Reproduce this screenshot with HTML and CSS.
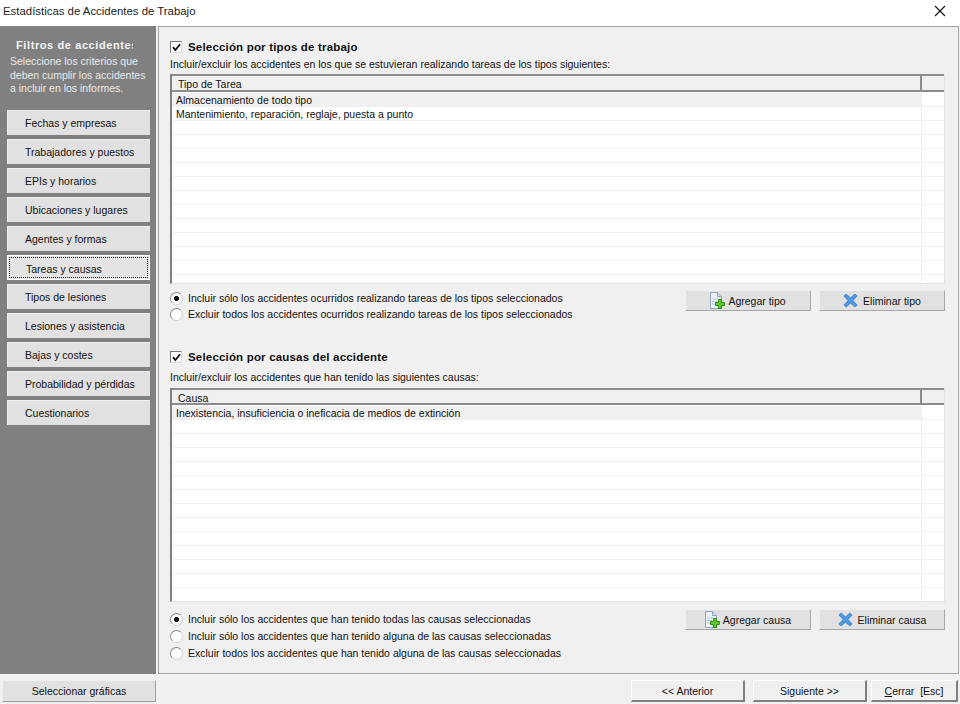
FILE: index.html
```html
<!DOCTYPE html>
<html lang="es">
<head>
<meta charset="utf-8">
<title>Estadísticas de Accidentes de Trabajo</title>
<link rel="stylesheet" href="styles.css">
</head>
<body>
<svg class="defs" width="0" height="0" aria-hidden="true">
  <symbol id="i-add" viewBox="0 0 18 18">
    <path d="M2.5 .5h7l4 4v12h-11z" fill="#eef3fb" stroke="#8fa3c4"/>
    <path d="M9.5 .5v4h4" fill="#cfdcf0" stroke="#8fa3c4"/>
    <path d="M4 7h7M4 9.5h5M4 12h4" stroke="#b4c4dc"/>
    <path d="M10.5 7.5h3v3h3v3h-3v3h-3v-3h-3v-3h3z" fill="#5fc828" stroke="#2f8f14"/>
  </symbol>
  <symbol id="i-del" viewBox="0 0 16 16">
    <path d="M1 3.2 3.2 1 8 5.2 12.8 1 15 3.2 10.6 8 15 12.8 12.8 15 8 10.8 3.2 15 1 12.8 5.4 8 1 3.2z" fill="#4a9ae8" stroke="#2a70c0" stroke-width=".7"/>
  </symbol>
</svg>
<header class="titlebar">
  <span class="title">Estadísticas de Accidentes de Trabajo</span>
  <svg class="close" width="12" height="12" viewBox="0 0 12 12"><path d="M1 1l10 10M11 1L1 11" stroke="#111" stroke-width="1.1"/></svg>
</header>
<div class="content">
  <aside class="sidebar">
    <h2 class="side-title">Filtros de accidentes</h2>
    <p class="side-text">Seleccione los criterios que deben cumplir los accidentes a incluir en los informes.</p>
    <nav class="side-nav">
      <button class="side-btn">Fechas y empresas</button>
      <button class="side-btn">Trabajadores y puestos</button>
      <button class="side-btn">EPIs y horarios</button>
      <button class="side-btn">Ubicaciones y lugares</button>
      <button class="side-btn">Agentes y formas</button>
      <button class="side-btn active"><span class="focus">Tareas y causas</span></button>
      <button class="side-btn">Tipos de lesiones</button>
      <button class="side-btn">Lesiones y asistencia</button>
      <button class="side-btn">Bajas y costes</button>
      <button class="side-btn">Probabilidad y pérdidas</button>
      <button class="side-btn">Cuestionarios</button>
    </nav>
  </aside>
  <main class="panel">
    <section class="sec sec-one">
      <label class="check-title"><span class="check"><svg width="9" height="9" viewBox="0 0 9 9"><path d="M1 4.2 3.4 7 8 1.2" fill="none" stroke="#111" stroke-width="1.8"/></svg></span>Selección por tipos de trabajo</label>
      <p class="sub">Incluir/excluir los accidentes en los que se estuvieran realizando tareas de los tipos siguientes:</p>
      <div class="grid grid-one">
        <div class="grid-head"><div class="hcell">Tipo de Tarea</div><div class="hend"></div></div>
        <div class="row first"><div class="cell">Almacenamiento de todo tipo</div><div class="end"></div></div>
        <div class="row"><div class="cell">Mantenimiento, reparación, reglaje, puesta a punto</div><div class="end"></div></div>
        <div class="row"><div class="cell"></div><div class="end"></div></div>
        <div class="row"><div class="cell"></div><div class="end"></div></div>
        <div class="row"><div class="cell"></div><div class="end"></div></div>
        <div class="row"><div class="cell"></div><div class="end"></div></div>
        <div class="row"><div class="cell"></div><div class="end"></div></div>
        <div class="row"><div class="cell"></div><div class="end"></div></div>
        <div class="row"><div class="cell"></div><div class="end"></div></div>
        <div class="row"><div class="cell"></div><div class="end"></div></div>
        <div class="row"><div class="cell"></div><div class="end"></div></div>
        <div class="row"><div class="cell"></div><div class="end"></div></div>
        <div class="row"><div class="cell"></div><div class="end"></div></div>
        <div class="row"><div class="cell"></div><div class="end"></div></div>
      </div>
      <div class="opts opts-one">
        <div class="radios">
          <div class="radio on">Incluir sólo los accidentes ocurridos realizando tareas de los tipos seleccionados</div>
          <div class="radio">Excluir todos los accidentes ocurridos realizando tareas de los tipos seleccionados</div>
        </div>
        <div class="actions">
          <button class="act"><svg width="18" height="18"><use href="#i-add"/></svg>Agregar tipo</button>
          <button class="act del"><svg width="15" height="15"><use href="#i-del"/></svg>Eliminar tipo</button>
        </div>
      </div>
    </section>
    <section class="sec sec-two">
      <label class="check-title"><span class="check"><svg width="9" height="9" viewBox="0 0 9 9"><path d="M1 4.2 3.4 7 8 1.2" fill="none" stroke="#111" stroke-width="1.8"/></svg></span>Selección por causas del accidente</label>
      <p class="sub sub-two">Incluir/excluir los accidentes que han tenido las siguientes causas:</p>
      <div class="grid grid-two">
        <div class="grid-head"><div class="hcell">Causa</div><div class="hend"></div></div>
        <div class="row first"><div class="cell">Inexistencia, insuficiencia o ineficacia de medios de extinción</div><div class="end"></div></div>
        <div class="row"><div class="cell"></div><div class="end"></div></div>
        <div class="row"><div class="cell"></div><div class="end"></div></div>
        <div class="row"><div class="cell"></div><div class="end"></div></div>
        <div class="row"><div class="cell"></div><div class="end"></div></div>
        <div class="row"><div class="cell"></div><div class="end"></div></div>
        <div class="row"><div class="cell"></div><div class="end"></div></div>
        <div class="row"><div class="cell"></div><div class="end"></div></div>
        <div class="row"><div class="cell"></div><div class="end"></div></div>
        <div class="row"><div class="cell"></div><div class="end"></div></div>
        <div class="row"><div class="cell"></div><div class="end"></div></div>
        <div class="row"><div class="cell"></div><div class="end"></div></div>
        <div class="row"><div class="cell"></div><div class="end"></div></div>
        <div class="row"><div class="cell"></div><div class="end"></div></div>
        <div class="row"><div class="cell"></div><div class="end"></div></div>
      </div>
      <div class="opts opts-two">
        <div class="radios">
          <div class="radio on">Incluir sólo los accidentes que han tenido todas las causas seleccionadas</div>
          <div class="radio">Incluir sólo los accidentes que han tenido alguna de las causas seleccionadas</div>
          <div class="radio">Excluir todos los accidentes que han tenido alguna de las causas seleccionadas</div>
        </div>
        <div class="actions">
          <button class="act"><svg width="18" height="18"><use href="#i-add"/></svg>Agregar causa</button>
          <button class="act del"><svg width="15" height="15"><use href="#i-del"/></svg>Eliminar causa</button>
        </div>
      </div>
    </section>
  </main>
</div>
<footer class="footer">
  <button class="side-btn graphs">Seleccionar gráficas</button>
  <div class="foot-right">
    <button class="foot-btn prev">&lt;&lt; Anterior</button>
    <button class="foot-btn next">Siguiente &gt;&gt;</button>
    <button class="foot-btn closebtn"><span class="u">C</span>errar &nbsp;[Esc]</button>
  </div>
</footer>
</body>
</html>
```
FILE: styles.css
```css
* { box-sizing: border-box; }
html, body { margin: 0; height: 100%; }
body {
  width: 960px;
  height: 704px;
  overflow: hidden;
  background: #f0f0f0;
  color: #111;
  font: 10.5px/14px "Liberation Sans", Arial, sans-serif;
  display: flex;
  flex-direction: column;
}
button { font: inherit; color: inherit; padding: 0; cursor: default; }
.defs { position: absolute; }

.titlebar {
  height: 26px;
  background: #fff;
  display: flex;
  align-items: center;
  justify-content: space-between;
  padding: 0 14px 4px 3px;
  flex: none;
}
.title { font-size: 11.4px; color: #222; }

.content { flex: none; height: 648px; display: flex; gap: 2px; padding-right: 2px; }

.sidebar {
  width: 156px;
  background: #808080;
  flex: none;
  padding-top: 13px;
}
.side-title {
  margin: 0 0 0 16px;
  width: 117px;
  overflow: hidden;
  white-space: nowrap;
  font-size: 11px;
  line-height: 13px;
  letter-spacing: .6px;
  font-weight: bold;
  color: #f4f4f4;
}
.side-text {
  margin: 3px 0 0 10px;
  width: 140px;
  height: 41px;
  line-height: 13.5px;
  color: #eaeaea;
}
.side-nav {
  margin: 14px 0 0 7px;
  display: flex;
  flex-direction: column;
  gap: 4px;
  width: 143px;
}
.side-btn {
  height: 25px;
  border: 0;
  border-top: 1px solid #efefef;
  border-left: 1px solid #efefef;
  background: #e1e1e1;
  text-align: left;
  padding-left: 17px;
}
.side-btn.active { background: #e4e4e4; border: 1px solid #fff; padding: 1px; }
.focus {
  display: block;
  height: 21px;
  line-height: 22px;
  padding-left: 16px;
  border: 1px dotted #222;
}

.panel {
  flex: 1;
  border: 1px solid #a0a0a0;
  border-right-color: #a8a8a8;
  border-bottom-color: #a8a8a8;
  padding: 0 13px 0 11px;
  background: #f0f0f0;
}
.sec-one { padding-top: 13px; }
.sec-two { padding-top: 29px; }

.check-title {
  display: flex;
  align-items: center;
  height: 14px;
  font-weight: bold;
  font-size: 11.5px;
  letter-spacing: .18px;
  color: #111;
}
.check {
  width: 12px;
  height: 12px;
  margin: 0 6px 0 0;
  background: #fff;
  border: 1px solid #777;
  border-right-color: #ddd;
  border-bottom-color: #ddd;
  display: flex;
  align-items: center;
  justify-content: center;
}
.sub { margin: 3px 0 0; height: 14px; }
.sub-two { margin-top: 6px; }

.grid {
  margin-top: 3px;
  width: 775px;
  background: #fff;
  overflow: hidden;
  border-left: 2px solid #808080;
  border-bottom: 1px solid #e4e4e4;
  border-right: 1px solid #e4e4e4;
}
.grid-one { height: 210px; }
.grid-two { height: 214px; margin-top: 4px; }
.grid-head {
  height: 18px;
  margin-bottom: 1px;
  display: flex;
  background: #f0f0f0;
  border-top: 2px solid #8c8c8c;
  border-bottom: 2px solid #8c8c8c;
}
.hcell { width: 750px; padding: 2px 0 0 6px; line-height: 13px; border-right: 2px solid #8c8c8c; }
.hend { flex: 1; }
.row { height: 14px; display: flex; border-bottom: 1px solid #f0f0f0; line-height: 13px; }
.grid-two .grid-head { height: 17px; }
.cell { width: 750px; padding: 1px 0 0 4px; white-space: nowrap; border-right: 1px solid #f0f0f0; }
.row.first .cell { background: #f0f0f0; }
.end { flex: 1; }

.opts { display: flex; justify-content: space-between; }
.opts-one { padding-top: 6px; }
.opts-two { padding-top: 9px; }
.radios { display: flex; flex-direction: column; gap: 3px; padding-top: 1px; }
.opts-one .radios { gap: 2px; }
.radio { display: flex; align-items: center; height: 14px; white-space: nowrap; }
.radio::before {
  content: "";
  width: 11px;
  height: 11px;
  margin-right: 5px;
  border-radius: 50%;
  background: #fff;
  border: 1px solid #8a8a8a;
  border-right-color: #d0d0d0;
  border-bottom-color: #d0d0d0;
  flex: none;
}
.radio.on::before { background: radial-gradient(circle, #111 0 2.2px, #fff 2.8px); }

.actions { display: flex; gap: 8px; }
.opts-two .actions { margin-top: -2px; }
.act {
  width: 126px;
  height: 21px;
  padding-right: 2px;
  display: flex;
  align-items: center;
  justify-content: center;
  background: #e1e1e1;
  border: 0;
  border-top: 1px solid #f0f0f0;
  border-left: 1px solid #f0f0f0;
  border-right: 1px solid #a8a8a8;
  border-bottom: 1px solid #a8a8a8;
}
.act svg { flex: none; margin-right: 2px; }
.act.del { padding-right: 0; }
.act.del svg { margin-right: 5px; }

.footer { flex: 1; display: flex; align-items: flex-start; justify-content: space-between; padding: 6px 2px 0; }
.side-btn.graphs {
  width: 154px;
  height: 22px;
  padding: 0;
  text-align: center;
  border-right: 1px solid #a0a0a0;
  border-bottom: 1px solid #a0a0a0;
}
.foot-right { display: flex; }
.foot-btn {
  height: 22px;
  background: #f0f0f0;
  border: 0;
  border-top: 1px solid #fff;
  border-left: 1px solid #fff;
  border-right: 2px solid #808080;
  border-bottom: 2px solid #808080;
}
.prev { width: 114px; }
.next { width: 114px; margin-left: 8px; }
.closebtn { width: 87px; margin-left: 4px; }
.u { text-decoration: underline; }
```
